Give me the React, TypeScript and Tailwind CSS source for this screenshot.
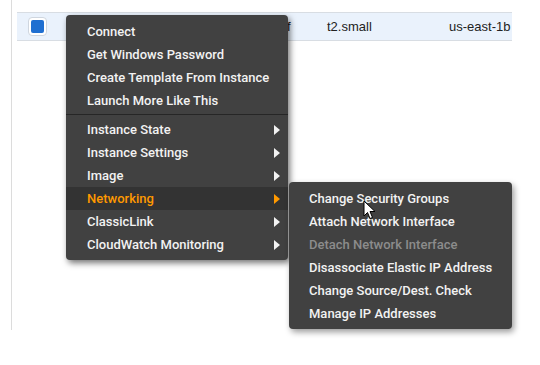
import React from "react";

const mainItems = [
  { label: "Connect" },
  { label: "Get Windows Password" },
  { label: "Create Template From Instance" },
  { label: "Launch More Like This" },
];

const subMenus = [
  { label: "Instance State" },
  { label: "Instance Settings" },
  { label: "Image" },
  { label: "Networking", active: true },
  { label: "ClassicLink" },
  { label: "CloudWatch Monitoring" },
];

const networking = [
  { label: "Change Security Groups" },
  { label: "Attach Network Interface" },
  { label: "Detach Network Interface", disabled: true },
  { label: "Disassociate Elastic IP Address" },
  { label: "Change Source/Dest. Check" },
  { label: "Manage IP Addresses" },
];

function Arrow({ active }: { active?: boolean }) {
  return (
    <svg width="6" height="10" viewBox="0 0 6 10" className="shrink-0">
      <path d="M0 0 L6 5 L0 10 Z" fill={active ? "#f90" : "#f2f2f2"} />
    </svg>
  );
}

function Cursor() {
  return (
    <svg width="14" height="20" viewBox="0 0 14 20" className="absolute left-[363px] top-[200px]">
      <path d="M1 1 L1 16 L4.5 12.5 L7 18.5 L9.5 17.5 L7 11.5 L12 11.5 Z" fill="#fff" stroke="#000" strokeWidth="1" strokeLinejoin="round" />
    </svg>
  );
}

export default function App() {
  return (
    <div className="relative w-[540px] h-[365px] bg-white overflow-hidden font-['Roboto','Liberation_Sans',sans-serif]">
      {/* table area */}
      <div className="ml-[11px] h-[330px] border-l border-[#dcdcdc] pt-[12px] pl-[5px]">
        <div className="w-[495px] h-[29px] flex items-center whitespace-nowrap bg-[#eaf2fc] border-y border-[#d8dde3] text-[13px] text-[#222] font-['Liberation_Sans',Arial,sans-serif]">
          <div className="w-[203px] shrink-0 pl-[11px]">
            <div className="w-[19px] h-[19px] rounded-[4px] bg-white border border-[#cfd6df] p-[2px]">
              <div className="w-full h-full rounded-[2px] bg-[#1f6fd1]" />
            </div>
          </div>
          <div className="w-[107px] shrink-0 pl-[10px]">i-0a6b2c3f</div>
          <div className="w-[122px] shrink-0">t2.small</div>
          <div className="shrink-0">us-east-1b</div>
        </div>
      </div>

      {/* context menu */}
      <div className="absolute left-[66px] top-[15px] w-[222px] pt-[5px] pb-[4px] bg-[#414141] rounded-[4px] shadow-[2px_3px_6px_rgba(0,0,0,0.55)] text-[13px] font-medium text-[#f2f2f2]">
        {mainItems.map((it) => (
          <div key={it.label} className="h-[23px] flex items-center pl-[21px]">
            {it.label}
          </div>
        ))}
        <div className="mt-[2px] mb-[3px] border-t border-[#262626]" />
        {subMenus.map((it) => (
          <div
            key={it.label}
            className={`h-[23px] flex items-center justify-between pl-[21px] pr-[8px] ${
              it.active ? "bg-[#333333] text-[#ff9900]" : ""
            }`}
          >
            <span>{it.label}</span>
            <Arrow active={it.active} />
          </div>
        ))}
      </div>

      {/* networking submenu */}
      <div className="absolute left-[289px] top-[182px] w-[223px] pt-[5px] pb-[4px] bg-[#414141] rounded-[4px] shadow-[2px_3px_6px_rgba(0,0,0,0.4)] text-[13px] font-medium text-[#f2f2f2]">
        {networking.map((it) => (
          <div key={it.label} className={`h-[23px] flex items-center pl-[20px] ${it.disabled ? "text-[#8c8c8c]" : ""}`}>
            {it.label}
          </div>
        ))}
      </div>

      <Cursor />
    </div>
  );
}
